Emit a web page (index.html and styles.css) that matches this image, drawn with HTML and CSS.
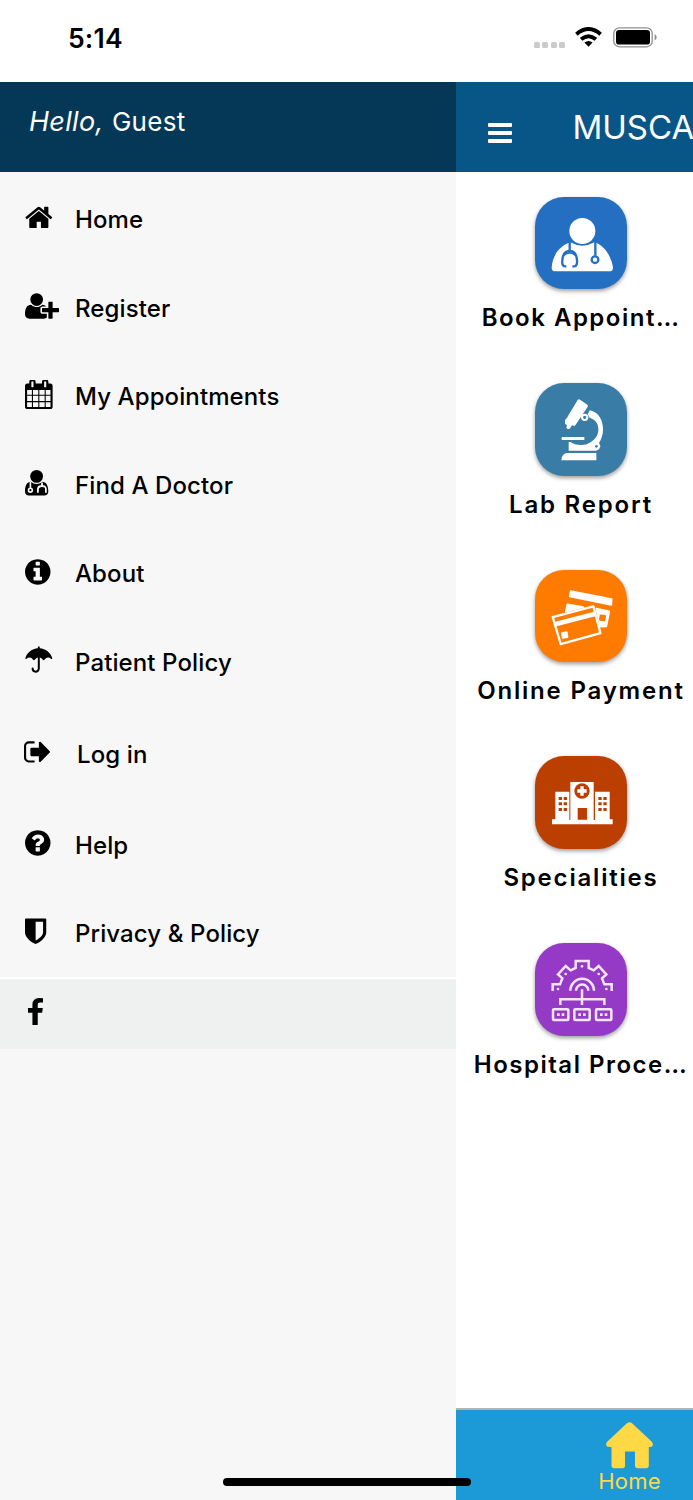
FILE: index.html
```
<!DOCTYPE html>
<html lang="en">
<head>
<meta charset="utf-8">
<title>Hospital App</title>
<link rel="stylesheet" href="styles.css">
</head>
<body>
<div class="phone">
  <div class="status">
    <span class="time">5:14</span>
    <div class="indicators">
      <div class="dots"><i></i><i></i><i></i><i></i></div>
      <svg class="wifi" viewBox="0 0 27 20"><g fill="none" stroke="#000" stroke-width="3.9"><path d="M1.4 7.2Q13.5-3.2 25.6 7.2"/><path d="M6.1 12.3Q13.5 6 20.9 12.3"/></g><path d="M9.4 15.5Q13.5 12.5 17.6 15.5L13.5 19.8Z"/></svg>
      <svg class="battery" viewBox="0 0 44 21"><rect x=".8" y=".8" width="38.4" height="19" rx="5.6" fill="none" stroke="#8e8e8e" stroke-width="1.3"/><rect x="3" y="3" width="34" height="14.6" rx="3.2"/><path d="M41.6 7Q43.6 8 43.6 10.3T41.6 13.6Z" fill="#8e8e8e"/></svg>
    </div>
  </div>
  <div class="panes">
    <aside class="drawer">
      <header class="greeting"><em>Hello,</em> <span>Guest</span></header>
      <nav class="menu">
        <a class="row"><svg class="ico" viewBox="64 30 2048 1792"><path d="M1472 992v480q0 26-19 45t-45 19h-384v-384h-256v384h-384q-26 0-45-19t-19-45v-480q0-1 .5-3t.5-3l575-474 575 474q1 2 1 6zm223-69l-62 74q-8 9-21 11h-3q-13 0-21-7l-692-577-692 577q-12 8-24 7-13-2-21-11l-62-74q-8-10-7-23.5t11-21.5l719-599q32-26 76-26t76 26l244 204v-195q0-14 9-23t23-9h192q14 0 23 9t9 23v408l219 182q10 8 11 21.5t-7 23.5z"/></svg><span>Home</span></a>
        <a class="row"><svg class="ico" viewBox="0 0 2048 1792"><path d="M704 896q-159 0-271.5-112.5t-112.5-271.5 112.5-271.5 271.5-112.5 271.5 112.5 112.5 271.5-112.5 271.5-271.5 112.5zm960 128h352q13 0 22.5 9.5t9.5 22.5v192q0 13-9.5 22.5t-22.5 9.5h-352v352q0 13-9.5 22.5t-22.5 9.5h-192q-13 0-22.5-9.5t-9.5-22.5v-352h-352q-13 0-22.5-9.5t-9.5-22.5v-192q0-13 9.5-22.5t22.5-9.5h352v-352q0-13 9.5-22.5t22.5-9.5h192q13 0 22.5 9.5t9.5 22.5v352zm-736 224q0 52 38 90t90 38h256v238q-68 50-171 50h-874q-121 0-194-69t-73-190q0-53 3.5-103.5t14-109 26.5-108.5 43-97.5 62-81 85.5-53.5 111.5-20q19 0 39 17 79 61 154.5 91.5t164.5 30.5 164.5-30.5 154.5-91.5q20-17 39-17 132 0 217 96h-223q-52 0-90 38t-38 90v192z"/></svg><span>Register</span></a>
        <a class="row"><svg class="ico" viewBox="64 40 2048 1792"><path d="M192 1664h288v-288h-288v288zm352 0h320v-288h-320v288zm-352-352h288v-320h-288v320zm352 0h320v-320h-320v320zm-352-384h288v-288h-288v288zm736 736h320v-288h-320v288zm-384-736h320v-288h-320v288zm768 736h288v-288h-288v288zm-384-352h320v-320h-320v320zm-352-864v-288q0-13-9.5-22.5t-22.5-9.5h-64q-13 0-22.5 9.5t-9.5 22.5v288q0 13 9.5 22.5t22.5 9.5h64q13 0 22.5-9.5t9.5-22.5zm736 864h288v-320h-288v320zm-384-384h320v-288h-320v288zm384 0h288v-288h-288v288zm32-480v-288q0-13-9.5-22.5t-22.5-9.5h-64q-13 0-22.5 9.5t-9.5 22.5v288q0 13 9.5 22.5t22.5 9.5h64q13 0 22.5-9.5t9.5-22.5zm384-64v1280q0 52-38 90t-90 38h-1408q-52 0-90-38t-38-90v-1280q0-52 38-90t90-38h128v-96q0-66 47-113t113-47h64q66 0 113 47t47 113v96h384v-96q0-66 47-113t113-47h64q66 0 113 47t47 113v96h128q52 0 90 38t38 90z"/></svg><span>My Appointments</span></a>
        <a class="row"><svg class="ico" viewBox="0 0 34 29.75"><circle cx="11.6" cy="8.4" r="6.4"/><path d="M5.6 13.7Q11.6 18.2 17.6 13.7C22 14.4 23.3 18.5 23.3 23.4C23.3 26 21.6 27.5 19.2 27.5H4C1.6 27.5 0 26 0 23.4C0 18.5 1.2 14.4 5.6 13.7Z"/><g fill="none" stroke="#f7f7f7" stroke-width="1.6"><path d="M5.4 14V20"/><circle cx="5.4" cy="22.2" r="1.9"/><path d="M17 14.4V17.6M12.9 24.7V21.4Q12.9 18 17 18T20.9 21.4V24.7" stroke-width="1.8"/></g></svg><span>Find A Doctor</span></a>
        <a class="row"><svg class="ico" viewBox="128 0 2048 1792"><path d="M1152 1376v-160q0-14-9-23t-23-9h-96v-512q0-14-9-23t-23-9h-320q-14 0-23 9t-9 23v160q0 14 9 23t23 9h96v320h-96q-14 0-23 9t-9 23v160q0 14 9 23t23 9h448q14 0 23-9t9-23zm-128-896v-160q0-14-9-23t-23-9h-192q-14 0-23 9t-9 23v160q0 14 9 23t23 9h192q14 0 23-9t9-23zm640 416q0 209-103 385.5t-279.5 279.5-385.5 103-385.5-103-279.5-279.5-103-385.5 103-385.5 279.5-279.5 385.5-103 385.5 103 279.5 279.5 103 385.5z"/></svg><span>About</span></a>
        <a class="row"><svg class="ico" viewBox="0 0 34 29.75"><path d="M12.9 2.2V1Q13.8-.4 14.7 1V2.2C20.4 2.600 25.7 6.4 27.3 12.3Q27.3 13.4 26.2 12.9Q22.6 9.7 19.2 14Q18.7 14.5 18.2 14Q13.8 8.6 9.4 14Q8.9 14.5 8.4 14Q5 9.7 1.4 12.9Q.3 13.4.3 12.3C1.9 6.4 7.2 2.6 12.9 2.2Z"/><path d="M13.8 11.5V22.6A3.1 3.1 0 0 1 7.600 22.600" fill="none" stroke="#000" stroke-width="2" stroke-linecap="round"/></svg><span>Patient Policy</span></a>
        <a class="row login"><svg class="ico" viewBox="64 0 2048 1792"><path d="M704 1440q0 4 1 20t.5 26.500-3 23.500-10 19.500-20.500 6.500h-320q-119 0-203.500-84.500t-84.500-203.500v-704q0-119 84.500-203.500t203.500-84.500h320q13 0 22.500 9.500t9.500 22.500q0 4 1 20t.5 26.500-3 23.500-10 19.500-20.500 6.500h-320q-66 0-113 47t-47 113v704q0 66 47 113t113 47h312l11.500 1 11.500 3 8 5.500 7 9 2 13.500zm928-544q0 26-19 45l-544 544q-19 19-45 19t-45-19-19-45v-288h-448q-26 0-45-19t-19-45v-384q0-26 19-45t45-19h448v-288q0-26 19-45t45-19 45 19l544 544q19 19 19 45z"/></svg><span>Log in</span></a>
        <a class="row"><svg class="ico" viewBox="128 0 2048 1792"><path d="M1024 1376v-192q0-14-9-23t-23-9h-192q-14 0-23 9t-9 23v192q0 14 9 23t23 9h192q14 0 23-9t9-23zm256-672q0-88-55.500-163t-138.500-116-170-41q-243 0-371 213-15 24 8 42l132 100q7 6 19 6 16 0 25-12 53-68 86-92 34-24 86-24 48 0 85.500 26t37.500 59q0 38-20 61t-68 45q-63 28-115.500 86.500t-52.500 125.500v36q0 14 9 23t23 9h192q14 0 23-9t9-23q0-19 21.500-49.500t54.500-49.500q32-18 49-28.500t46-35 44.500-48 28-60.500 12.500-81zm384 192q0 209-103 385.500t-279.500 279.500-385.500 103-385.500-103-279.500-279.500-103-385.500 103-385.500 279.500-279.500 385.500-103 385.500 103 279.500 279.500 103 385.500z"/></svg><span>Help</span></a>
        <a class="row"><svg class="ico" viewBox="256 40 2048 1792"><path d="M1344 960v-640h-448v1137q119-63 213-137 235-184 235-360zm192-768v768q0 86-33.500 170.500t-83 150-118 127.500-126.500 103-121 77.500-89.500 49.500-42.500 20q-12 6-26 6t-26-6q-16-7-42.500-20t-89.500-49.500-121-77.500-126.500-103-118-127.500-83-150-33.500-170.500v-768q0-26 19-45t45-19h1152q26 0 45 19t19 45z"/></svg><span>Privacy &amp; Policy</span></a>
      </nav>
      <div class="social"><svg class="fb" viewBox="479 0 864 1664" preserveAspectRatio="none"><path d="M1343 12v264h-157q-86 0-116 36t-30 108v189h293l-39 296h-254v759h-306v-759h-255v-296h255v-218q0-186 104-288.5t277-102.5q147 0 228 12z"/></svg></div>
    </aside>
    <main class="content">
      <header class="topbar"><div class="burger"><i></i><i></i><i></i></div><h1>MUSCA</h1></header>
      <section class="tiles">
        <div class="tile">
          <div class="badge blue"><svg viewBox="0 0 278 278"><circle cx="142" cy="102" r="39" fill="#fff"/><path d="M50 212C53 170 78 145 106 136Q142 156 178 136C211 145 231 185 234 212Q234 223 223 223H61Q50 223 50 212Z" fill="#fff"/><g fill="none" stroke="#246fc1" stroke-width="7"><path d="M104 134V160M94 208H90Q80 208 82 190Q84 162 104 162T126 190Q127 208 118 208H112"/><path d="M84 177Q104 158 124 177" stroke-width="5"/><path d="M181 134V176"/><circle cx="180" cy="188" r="10"/></g></svg></div>
          <p class="short">Book Appoint…</p>
        </div>
        <div class="tile">
          <div class="badge teal"><svg viewBox="0 0 278 278"><g fill="#fff"><path d="M128 51Q131 47 136 51L157 65Q161 69 157 73L124 122L119 129L111 127L104 137Q98 140 94 135L96 127L90 122V111L95 106Z"/><path d="M80 162H148V171H80ZM101 177H107Q114 184 130 185Q151 188 164 179C188 166 195 145 187 123Q179 108 164 104L158 94L164 82C192 87 205 114 204 142Q203 163 192 180Q198 187 194 196Q190 203 182 203H101ZM79 232Q80 211 98 210H184V232Z"/></g><circle cx="149" cy="103" r="8" fill="#397da6" stroke="#fff" stroke-width="6"/><circle cx="184" cy="190" r="4" fill="#397da6"/></svg></div>
          <p>Lab Report</p>
        </div>
        <div class="tile">
          <div class="badge orange"><svg viewBox="0 0 278 278"><g fill="#fff" stroke="#fff" stroke-linejoin="round" stroke-width="5"><path d="M107 63L230 87L229 105L104 79Z"/><path d="M97 103L145 111L92 125ZM184 116L223 124L214 169L196 170Z"/></g><rect x="193" y="134" width="19" height="19" rx="3" fill="#ff7b00" transform="rotate(8 202 143)"/><path d="M53 141L175 109L196 189L77 222Z" fill="#ff7b00" stroke="#fff" stroke-width="7" stroke-linejoin="round"/><path d="M60 163L182 131" stroke="#fff" stroke-width="14"/><rect x="79" y="185" width="20" height="20" rx="3" fill="#fff" transform="rotate(-10 89 195)"/></svg></div>
          <p>Online Payment</p>
        </div>
        <div class="tile">
          <div class="badge rust"><svg viewBox="0 0 278 278"><path d="M106 78H176V192H180V107H224V190H233V205H51V190H61V107H103V192H106Z" fill="#fff"/><g fill="#bc3f02"><circle cx="141" cy="105" r="23"/><path d="M128 156H156V191H128ZM71 123h10v9h-10zM86 123h10v9h-10zM71 139h10v9h-10zM86 139h10v9h-10zM71 156h10v9h-10zM86 156h10v9h-10zM190 123h10v9h-10zM205 123h10v9h-10zM190 139h10v9h-10zM205 139h10v9h-10zM190 156h10v9h-10zM205 156h10v9h-10z"/></g><path d="M141 91V119M127 105H155" stroke="#fff" stroke-width="10"/></svg></div>
          <p>Specialities</p>
        </div>
        <div class="tile">
          <div class="badge purple"><svg viewBox="0 0 278 278"><g fill="none" stroke="#f4e6fa" stroke-width="7.500"><path d="M53 144V124H75L82 106L69 94L92 69L107 82L122 75V54H161V75L176 82L191 69L214 94L201 106L208 124H230V144"/><path d="M106 143A35 35 0 0 1 177 143M123 143A18 18 0 0 1 160 143"/><path d="M141 139V186M76 186V169H208V186"/><rect x="54" y="199" width="46" height="32" rx="3"/><rect x="118" y="199" width="46" height="32" rx="3"/><rect x="183" y="199" width="46" height="32" rx="3"/></g><g fill="#f4e6fa"><path d="M66 211h8v8h-8zM80 211h8v8h-8zM130 211h8v8h-8zM144 211h8v8h-8zM195 211h8v8h-8zM209 211h8v8h-8z"/><circle cx="141" cy="70" r="4"/><circle cx="92" cy="93" r="4"/><circle cx="191" cy="93" r="4"/><circle cx="69" cy="138" r="4"/><circle cx="214" cy="138" r="4"/></g></svg></div>
          <p class="short">Hospital Proce…</p>
        </div>
      </section>
      <footer class="tabbar">
        <div class="tab"><svg viewBox="0 0 47 47"><path d="M21.200 1Q23.500-.7 25.800 1L45.600 19.500Q47.500 22 46.500 24Q45.800 25.200 42.800 25V43.500Q42.800 46.300 40 46.300H31.500Q29 46.300 29 43.500V29.500H19V43.500Q19 46.300 16.500 46.300H8.300Q5.500 46.300 5.500 43.500V25Q1.500 25.300.6 24Q-.6 21.500 1.400 19.500Z" fill="#ffd845"/></svg><span>Home</span></div>
      </footer>
    </main>
  </div>
  <div class="home-indicator"></div>
</div>
</body>
</html>
```
FILE: styles.css
```
* { box-sizing: border-box; }
body { margin: 0; background: #fff; font-family: Inter, "Liberation Sans", sans-serif; color: #000; }
.phone { position: relative; width: 693px; height: 1500px; overflow: hidden; display: flex; flex-direction: column; }
.status { height: 81.5px; flex: none; display: flex; justify-content: space-between; align-items: flex-start; padding: 22px 36px 0 68px; }
.time { font-size: 26.5px; line-height: 32px; font-weight: 600; letter-spacing: .2px; }
.indicators { display: flex; align-items: flex-start; padding-top: 5px; }
.dots { display: flex; gap: 2.300px; margin: 15px 10px 0 0; }
.dots i { width: 6px; height: 6px; border-radius: 1.500px; background: #cbcbcb; }
.wifi { width: 27px; height: 20px; margin-right: 11px; }
.battery { width: 44px; height: 21px; }
.panes { flex: 1; display: flex; min-height: 0; }
.drawer { width: 456px; flex: none; background: #f7f7f7; }
.greeting { height: 90.5px; background: #053857; color: #fff; padding: 23px 0 0 29px; font-size: 26px; line-height: 34px; letter-spacing: .3px; white-space: nowrap; }
.greeting em { font-size: 27px; }
.greeting span { margin-left: .8px; }
.menu { padding-top: 2.700px; border-bottom: 2px solid #fff; height: 807px; }
.row { display: flex; align-items: center; height: 88.600px; padding-left: 24.600px; }
.row.login { height: 94.100px; padding-left: 23.800px; }
.row span { font-size: 24px; font-weight: 500; letter-spacing: .11px; line-height: 30px; margin: 2px 0 0 .4px; }
.row.login span { margin: 4px 0 0 3.200px; }
.ico { width: 34px; height: 29.750px; margin: -3px 16px 0 0; flex: none; }
.social { height: 70px; background: #eff1f1; padding: 19px 0 0 28px; }
.fb { width: 15px; height: 27px; display: block; }
.content { flex: 1; min-width: 0; display: flex; flex-direction: column; background: #fff; }
.topbar { height: 90.5px; background: #085587; color: #fff; display: flex; align-items: flex-start; padding-left: 32px; overflow: hidden; }
.burger { width: 24px; margin: 41px 60.500px 0 0; display: grid; gap: 4px; flex: none; }
.burger i { height: 4.200px; background: #fff; border-radius: 1px; }
h1 { margin: 25px 0 0; font-size: 33px; line-height: 41px; font-weight: 400; letter-spacing: 0; }
.tiles { flex: 1; padding: 24.500px 0 0 15px; }
.tile { width: 220px; height: 186.600px; display: flex; flex-direction: column; align-items: center; }
.badge { width: 92.700px; height: 92.700px; border-radius: 29px; box-shadow: 0 2px 4px rgba(0,0,0,.4); }
.badge svg { display: block; width: 100%; height: 100%; }
.blue { background: #246fc1; }
.teal { background: #397da6; }
.orange { background: #ff7b00; }
.rust { background: #bc3f02; }
.purple { background: #943ac6; }
.tile p { margin: 14px 0 0; text-align: center; font-size: 24px; line-height: 30px; font-weight: 600; letter-spacing: 1.800px; white-space: nowrap; }
.tile p.short { letter-spacing: 1.500px; }
.tabbar { height: 92px; background: #1b9ad7; border-top: 2px solid #b3b3b3; display: flex; justify-content: flex-end; padding: 12px 32px 0 0; }
.tab { display: flex; flex-direction: column; align-items: center; color: #ffd845; font-size: 22px; line-height: 24px; letter-spacing: .3px; }
.tab svg { width: 47px; height: 47px; }
.home-indicator { position: absolute; left: 222.500px; top: 1478px; width: 248px; height: 8px; border-radius: 4px; background: #000; }
```
